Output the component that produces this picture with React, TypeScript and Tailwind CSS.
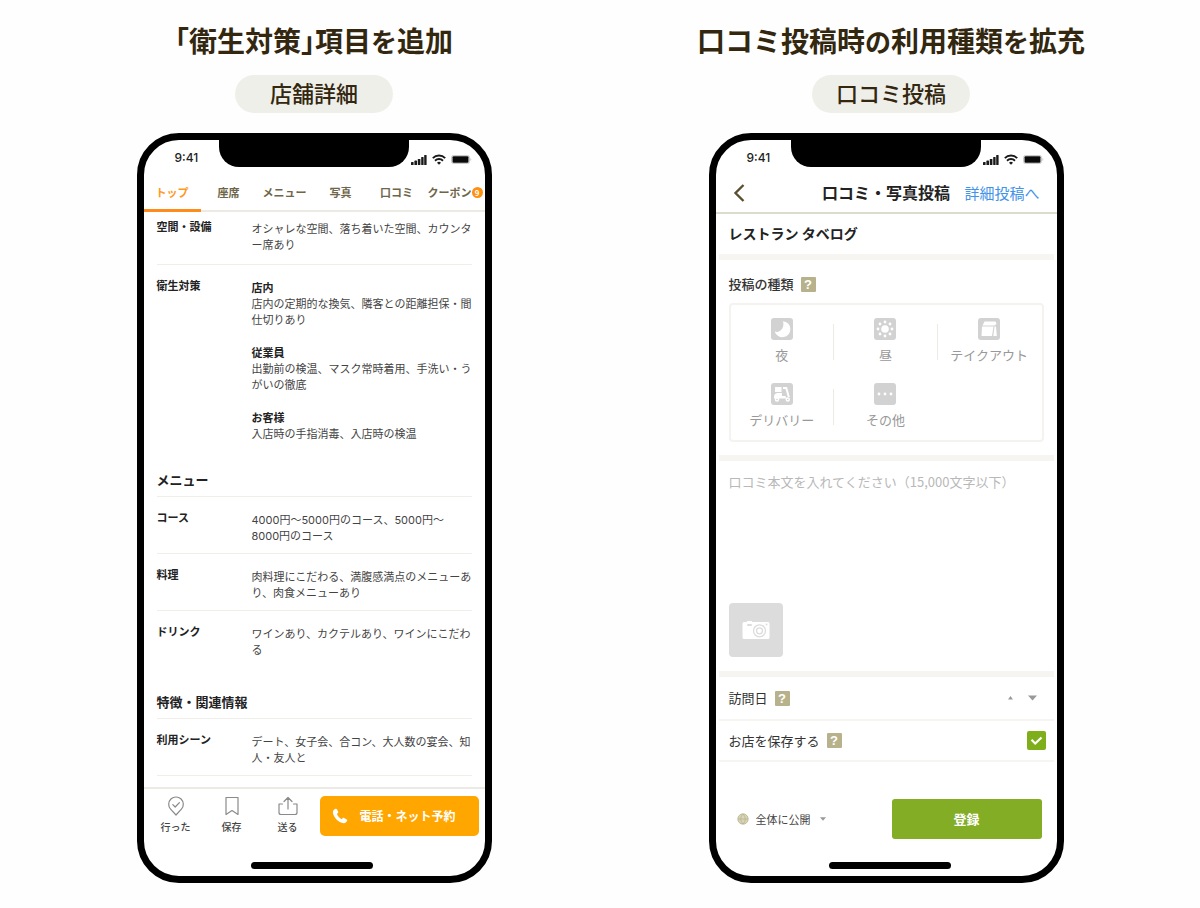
import type { ReactNode } from 'react';

const FONT = "font-['Noto_Sans_CJK_JP','Noto_Sans',sans-serif]";

function StatusBar() {
  return (
    <div className="grid h-[27px] grid-cols-[75px_190px_1fr]">
      <span className="pt-[9px] pl-[31px] font-['Inter','Noto_Sans',sans-serif] text-[12px] leading-[18px] font-medium text-[#222]">9:41</span>
      <span className="rounded-b-[20px] bg-black" />
      <span className="flex items-center justify-between pt-[11px] pr-[13px] pl-[2px]">
        <svg width="16" height="11" viewBox="0 0 16 11" fill="#1a1a1a" aria-hidden="true">
          <rect x="0" y="8" width="2.6" height="3" rx="0.6" />
          <rect x="3.4" y="6.6" width="2.6" height="4.4" rx="0.6" />
          <rect x="6.8" y="5" width="2.6" height="6" rx="0.6" />
          <rect x="10.2" y="3" width="2.4" height="8" rx="0.6" />
          <rect x="13.2" y="1" width="2.4" height="10" rx="0.6" />
        </svg>
        <svg width="14" height="11" viewBox="0 0 14 11" fill="none" stroke="#1a1a1a" strokeWidth="1.9" aria-hidden="true">
          <path d="M0.8 4.1a8.8 8.8 0 0 1 12.4 0" />
          <path d="M3 6.7a5.7 5.7 0 0 1 8 0" />
          <path d="M7 10.8 5 8.7a2.9 2.9 0 0 1 4 0z" fill="#1a1a1a" stroke="none" />
        </svg>
        <svg width="21" height="9" viewBox="0 0 21 9" aria-hidden="true">
          <rect x="0.5" y="0.5" width="18" height="8" rx="2" fill="none" stroke="#c9c9c9" />
          <rect x="1.5" y="1.2" width="16" height="6.6" rx="1" fill="#0a0a0a" />
          <path d="M19.5 3v3c1-.4 1-2.6 0-3z" fill="#bbb" />
        </svg>
      </span>
    </div>
  );
}

function Phone({ label, indicator, children }: { label: string; indicator: string; children: ReactNode }) {
  return (
    <section aria-label={label} className="mt-[20px] flex min-h-[750px] flex-col overflow-hidden rounded-[42px] border-[7px] border-black bg-white">
      <StatusBar />
      {children}
      <div className={`mb-[7px] h-[7px] w-[122px] rounded-full bg-black ${indicator}`} />
    </section>
  );
}

function Caption({ title, tag }: { title: ReactNode; tag: string }) {
  return (
    <header className="flex flex-col items-center text-[#33270f]">
      <h2 className="text-[28px] leading-[40px] font-bold whitespace-nowrap [font-feature-settings:'halt']">{title}</h2>
      <p className="mt-[14px] w-[158px] rounded-full bg-[#efefea] pb-[3px] text-center text-[22px] leading-[35px] font-medium">{tag}</p>
    </header>
  );
}

const tabs = ['トップ', '座席', 'メニュー', '写真', '口コミ'];

function Tabs() {
  return (
    <nav className="flex h-[45px] border-b-2 border-[#ebeae3] text-[11px] font-bold text-[#6f664a]">
      {tabs.map((t, i) => (
        <a
          key={t}
          href={`#tab-${i}`}
          className={
            i === 0
              ? '-mb-[2px] flex w-[57px] items-center justify-center border-b-[3px] border-[#ff8c1a] pt-[9px] text-[#ff9a1f]'
              : 'flex w-[56px] items-center justify-center pt-[8px]'
          }
        >
          {t}
        </a>
      ))}
      <a href="#tab-5" className="flex flex-1 items-center justify-end pt-[8px] pr-[2px]">
        クーポン
        <span className="flex h-[11px] w-[11px] items-center justify-center rounded-full bg-[#ff8f0f] text-[8px] leading-none text-white">9</span>
      </a>
    </nav>
  );
}

function Row({ term, last, children }: { term: string; last?: boolean; children: ReactNode }) {
  return (
    <div className={last ? 'flex pt-[13px] pb-[10px]' : 'flex border-b border-[#efeee8] pt-[13px] pb-[9px]'}>
      <dt className="w-[95px] shrink-0 font-bold text-[#222]">{term}</dt>
      <dd className="mt-[2px] w-[220px] text-[#444]">{children}</dd>
    </div>
  );
}

function SectionTitle({ children }: { children: ReactNode }) {
  return <h3 className="border-b border-[#efeee8] pb-[6px] text-[13px] leading-[20px] font-bold text-[#222]">{children}</h3>;
}

function Action({ label, children }: { label: string; children: ReactNode }) {
  return (
    <button className="flex w-[56px] flex-col items-center text-[10px] leading-[16px] font-medium text-[#444]">
      <svg width="20" height="20" viewBox="0 0 20 20" fill="none" stroke="#8a8a8a" strokeWidth="1.2" strokeLinejoin="round" strokeLinecap="round" className="mb-[3px]" aria-hidden="true">
        {children}
      </svg>
      {label}
    </button>
  );
}

function ShopPhone() {
  return (
    <Phone label="店舗詳細" indicator="mt-[26px] ml-[107px]">
      <Tabs />
      <div className="flex-1 px-[13px] pb-[10px] font-['Inter','Noto_Sans_CJK_JP',sans-serif] text-[11px] leading-[16px]">
        <dl className="-mt-[6px]">
          <Row term="空間・設備">
            オシャレな空間、落ち着いた空間、カウンター席あり
            <div className="h-[2px]" />
          </Row>
          <Row term="衛生対策" last>
            <div className="flex flex-col gap-[17px]">
              <p>
                <strong className="block text-[#222]">店内</strong>
                店内の定期的な換気、隣客との距離担保・間仕切りあり
              </p>
              <p>
                <strong className="block text-[#222]">従業員</strong>
                出勤前の検温、マスク常時着用、手洗い・うがいの徹底
              </p>
              <p>
                <strong className="block text-[#222]">お客様</strong>
                入店時の手指消毒、入店時の検温
              </p>
            </div>
          </Row>
        </dl>
        <div className="mt-[18px]">
          <SectionTitle>メニュー</SectionTitle>
          <dl>
            <Row term="コース">4000円〜5000円のコース、5000円〜<br />8000円のコース</Row>
            <Row term="料理">肉料理にこだわる、満腹感満点のメニューあり、肉食メニューあり</Row>
            <Row term="ドリンク" last>ワインあり、カクテルあり、ワインにこだわる</Row>
          </dl>
        </div>
        <div className="mt-[24px]">
          <SectionTitle>特徴・関連情報</SectionTitle>
          <dl>
            <Row term="利用シーン">デート、女子会、合コン、大人数の宴会、知人・友人と</Row>
          </dl>
        </div>
      </div>
      <div className="flex items-start border-t-2 border-[#ebeae3] pt-[7px] pr-[6px] pl-[4px]">
        <Action label="行った">
          <path d="M10 19 4.600 13.200A7.300 7.300 0 1 1 15.400 13.200z" />
          <path d="m6.800 8.600 2.400 2.400 4.200-4.400" />
        </Action>
        <Action label="保存">
          <path d="M4 1.500h12v17l-6-4-6 4z" />
        </Action>
        <Action label="送る">
          <path d="M4.500 8H1v8.500a2 2 0 0 0 2 2h14a2 2 0 0 0 2-2V8h-3.500M10 13V2M6 5.500l4-4 4 4" />
        </Action>
        <button className="ml-[4px] flex h-[40px] flex-1 items-center rounded-[5px] bg-[#ffa600] pl-[12px] text-[12px] font-bold text-white">
          <svg width="16" height="16" viewBox="0 0 16 16" fill="#fff" className="mr-[12px]" aria-hidden="true">
            <path d="M3.600.8c.5-.3 1-.1 1.300.4L6.200 3.700c.2.5.1.9-.3 1.300l-1 .9c.8 2.200 2.600 4.200 4.900 5.300l1-1.100c.4-.4.8-.5 1.300-.2l2.700 1.600c.5.3.6.8.3 1.300-.7 1.500-1.900 2.500-3.300 2.400C6.300 14.700 1 8.500.9 4.200.9 2.700 2 1.500 3.600.8z" />
          </svg>
          電話・ネット予約
        </button>
      </div>
    </Phone>
  );
}

function Help() {
  return (
    <button aria-label="ヘルプ" className="h-[15px] w-[15px] rounded-[1px] bg-[#b8b28c] text-center font-['Liberation_Sans',sans-serif] text-[13px] leading-[15px] font-bold text-white">
      ?
    </button>
  );
}

function Band() {
  return <div className="mx-[3px] h-[6px] shrink-0 bg-[#f6f5f1]" />;
}

function Kind({ label, divider, children }: { label: string; divider?: boolean; children: ReactNode }) {
  return (
    <div className="flex items-center">
      <button className="flex flex-1 flex-col items-center text-[13px] leading-[20px] whitespace-nowrap text-[#999]">
        <svg width="22" height="22" viewBox="0 0 22 22" fill="#fff" className="mb-[5px]" aria-hidden="true">
          <rect width="22" height="22" rx="3" fill="#d2d2d2" />
          {children}
        </svg>
        {label}
      </button>
      <span className={divider ? 'h-[36px] w-px bg-[#ecebe6]' : 'w-px'} />
    </div>
  );
}

function Caret({ small }: { small?: boolean }) {
  return (
    <svg width={small ? 6 : 9} height={small ? 4 : 6} viewBox="0 0 9 6" fill="#999" className="pointer-events-none" aria-hidden="true">
      <path d="M0 0.500h9L4.500 5.500z" />
    </svg>
  );
}

function ReviewPhone() {
  return (
    <Phone label="口コミ投稿" indicator="mt-[23px] ml-[113px]">
      <div className="grid grid-cols-[1fr_auto_1fr] items-center border-b-2 border-[#dddbcd] pt-[9px] pr-[17px] pb-[3px] pl-[17px] leading-[33px]">
        <button aria-label="戻る">
          <svg width="12" height="18" viewBox="0 0 12 18" fill="none" stroke="#5a4f2e" strokeWidth="2.400" aria-hidden="true">
            <path d="M10.500 1 2.500 9l8 8" />
          </svg>
        </button>
        <h3 className="text-[16px] font-bold text-[#222]">口コミ・写真投稿</h3>
        <a href="#detail" className="text-right text-[15px] whitespace-nowrap text-[#3f93ea]">詳細投稿へ</a>
      </div>
      <p className="pt-[9px] pb-[11px] pl-[13px] text-[14px] leading-[20px] font-bold text-[#222]">レストラン タベログ</p>
      <Band />
      <div className="px-[13px] pt-[13px] pb-[13px]">
        <div className="flex items-center gap-[7px] text-[13px] leading-[22px] font-medium text-[#333]">
          投稿の種類
          <Help />
        </div>
        <div className="mt-[8px] grid grid-cols-3 gap-y-[18px] rounded-[4px] border-2 border-[#f4f3ef] pt-[13px] pb-[10px]">
          <Kind label="夜" divider>
            <path d="M12 3.200a8 8 0 1 1-8.300 10.300c5 2 10.300-3.500 8.300-10.300z" />
          </Kind>
          <Kind label="昼" divider>
            <circle cx="11" cy="11" r="3.800" />
            <circle cx="11" cy="4" r="1.400" />
            <circle cx="11" cy="18" r="1.400" />
            <circle cx="4" cy="11" r="1.400" />
            <circle cx="18" cy="11" r="1.400" />
            <circle cx="6" cy="6" r="1.400" />
            <circle cx="16" cy="6" r="1.400" />
            <circle cx="6" cy="16" r="1.400" />
            <circle cx="16" cy="16" r="1.400" />
          </Kind>
          <Kind label="テイクアウト">
            <path d="M6.500 3.500h11l1 2.500-2 1.500h-12zM4 8.500h11.500L14 18H3.500zM16.500 8.500h1.500l.8 9.500h-3.500z" />
          </Kind>
          <Kind label="デリバリー" divider>
            <path d="M4 4h6.500v5H4zM12 4h4l2.800 10h-2L14.500 6H12zM3 14c0-2.500 1.500-4 4-4h4v3h3.500l.7 2.500H3z" />
            <circle cx="6" cy="16.500" r="2.200" />
            <circle cx="16.800" cy="16.500" r="2.200" />
            <circle cx="6" cy="16.500" r="0.800" fill="#d2d2d2" />
            <circle cx="16.800" cy="16.500" r="0.800" fill="#d2d2d2" />
          </Kind>
          <Kind label="その他">
            <circle cx="5" cy="11" r="1.400" />
            <circle cx="11" cy="11" r="1.400" />
            <circle cx="17" cy="11" r="1.400" />
          </Kind>
        </div>
      </div>
      <Band />
      <div className="flex flex-1 flex-col px-[13px] pt-[10px] pb-[14px]">
        <textarea
          aria-label="口コミ本文"
          placeholder="口コミ本文を入れてください（15,000文字以下）"
          className="w-full flex-1 resize-none text-[13px] leading-[22px] placeholder:text-[#b8b8b8] focus:outline-none"
        />
        <button aria-label="写真を追加" className="flex h-[54px] w-[54px] items-center justify-center rounded-[4px] bg-[#dcdcdc]">
          <svg width="28" height="20" viewBox="0 0 28 20" aria-hidden="true">
            <path d="M2 2h3V1h5v1h16a1.500 1.500 0 0 1 1.500 1.500v14A1.500 1.500 0 0 1 26 19H2A1.500 1.500 0 0 1 .5 17.500v-14A1.500 1.500 0 0 1 2 2z" fill="#fff" />
            <rect x="5" y="4" width="5" height="2" rx="1" fill="#dcdcdc" />
            <circle cx="17.500" cy="10.800" r="6" fill="none" stroke="#dcdcdc" strokeWidth="1.300" />
            <circle cx="17.500" cy="10.800" r="3" fill="none" stroke="#dcdcdc" strokeWidth="1.300" />
            <circle cx="24.500" cy="4.500" r="0.900" fill="#dcdcdc" />
          </svg>
        </button>
      </div>
      <Band />
      <div className="mx-[3px] flex items-center gap-[7px] border-b-2 border-[#f6f5f1] pr-[17px] pl-[10px] text-[13px] leading-[42px] text-[#333]">
        <label htmlFor="visit">訪問日</label>
        <Help />
        <select id="visit" className="ml-auto h-[20px] w-[20px] appearance-none bg-transparent text-[13px] text-[#888]">
          <option value="" />
        </select>
        <svg width="5" height="4" viewBox="0 0 5 4" fill="#999" className="pointer-events-none mr-[8px]" aria-hidden="true">
          <path d="M0 3.500 2.500 0 5 3.500z" />
        </svg>
        <Caret />
      </div>
      <div className="mx-[3px] flex items-center gap-[7px] border-b-2 border-[#f6f5f1] pr-[8px] pl-[10px] text-[13px] leading-[39px] text-[#333]">
        <label htmlFor="save">お店を保存する</label>
        <Help />
        <span className="ml-auto grid">
          <input id="save" type="checkbox" defaultChecked className="col-start-1 row-start-1 h-[19px] w-[19px] appearance-none rounded-[2px] bg-[#7fae1b]" />
          <svg width="19" height="19" viewBox="0 0 19 19" fill="none" stroke="#fff" strokeWidth="2.200" className="pointer-events-none col-start-1 row-start-1" aria-hidden="true">
            <path d="m4.500 8.800 3.700 3.700L14.500 6.500" />
          </svg>
        </span>
      </div>
      <div className="mt-[37px] flex items-center pr-[15px] pl-[21px]">
        <svg width="12" height="12" viewBox="0 0 12 12" fill="#d9d5ba" stroke="#b8b28c" strokeWidth="0.800" className="mr-[7px]" aria-hidden="true">
          <circle cx="6" cy="6" r="5.200" />
          <path d="M1 6h10M6 1c-3 3-3 7 0 10M6 1c3 3 3 7 0 10" fill="none" />
        </svg>
        <select aria-label="公開範囲" className="mr-[9px] h-[20px] appearance-none bg-transparent text-[11px] text-[#444]">
          <option>全体に公開</option>
        </select>
        <Caret small />
        <button className="ml-auto h-[40px] w-[150px] rounded-[3px] bg-[#82ad25] text-[13px] font-bold text-white">登録</button>
      </div>
    </Phone>
  );
}

export default function App() {
  return (
    <main className={`${FONT} flex min-h-screen flex-wrap items-start justify-center gap-x-[217px] gap-y-10 bg-[#fefefe] pt-[21px] pb-[24px]`}>
      <article className="-mt-px w-[355px]">
        <Caption
          title={
            <>
              「衛生対策」項目<span className="text-[26px]">を</span>追加
            </>
          }
          tag="店舗詳細"
        />
        <ShopPhone />
      </article>
      <article className="-mt-px w-[355px]">
        <div className="-mr-[10px]">
          <Caption
            title={
              <>
                口コミ投稿時<span className="text-[26px]">の</span>利用種類<span className="text-[26px]">を</span>拡充
              </>
            }
            tag="口コミ投稿"
          />
        </div>
        <ReviewPhone />
      </article>
    </main>
  );
}
